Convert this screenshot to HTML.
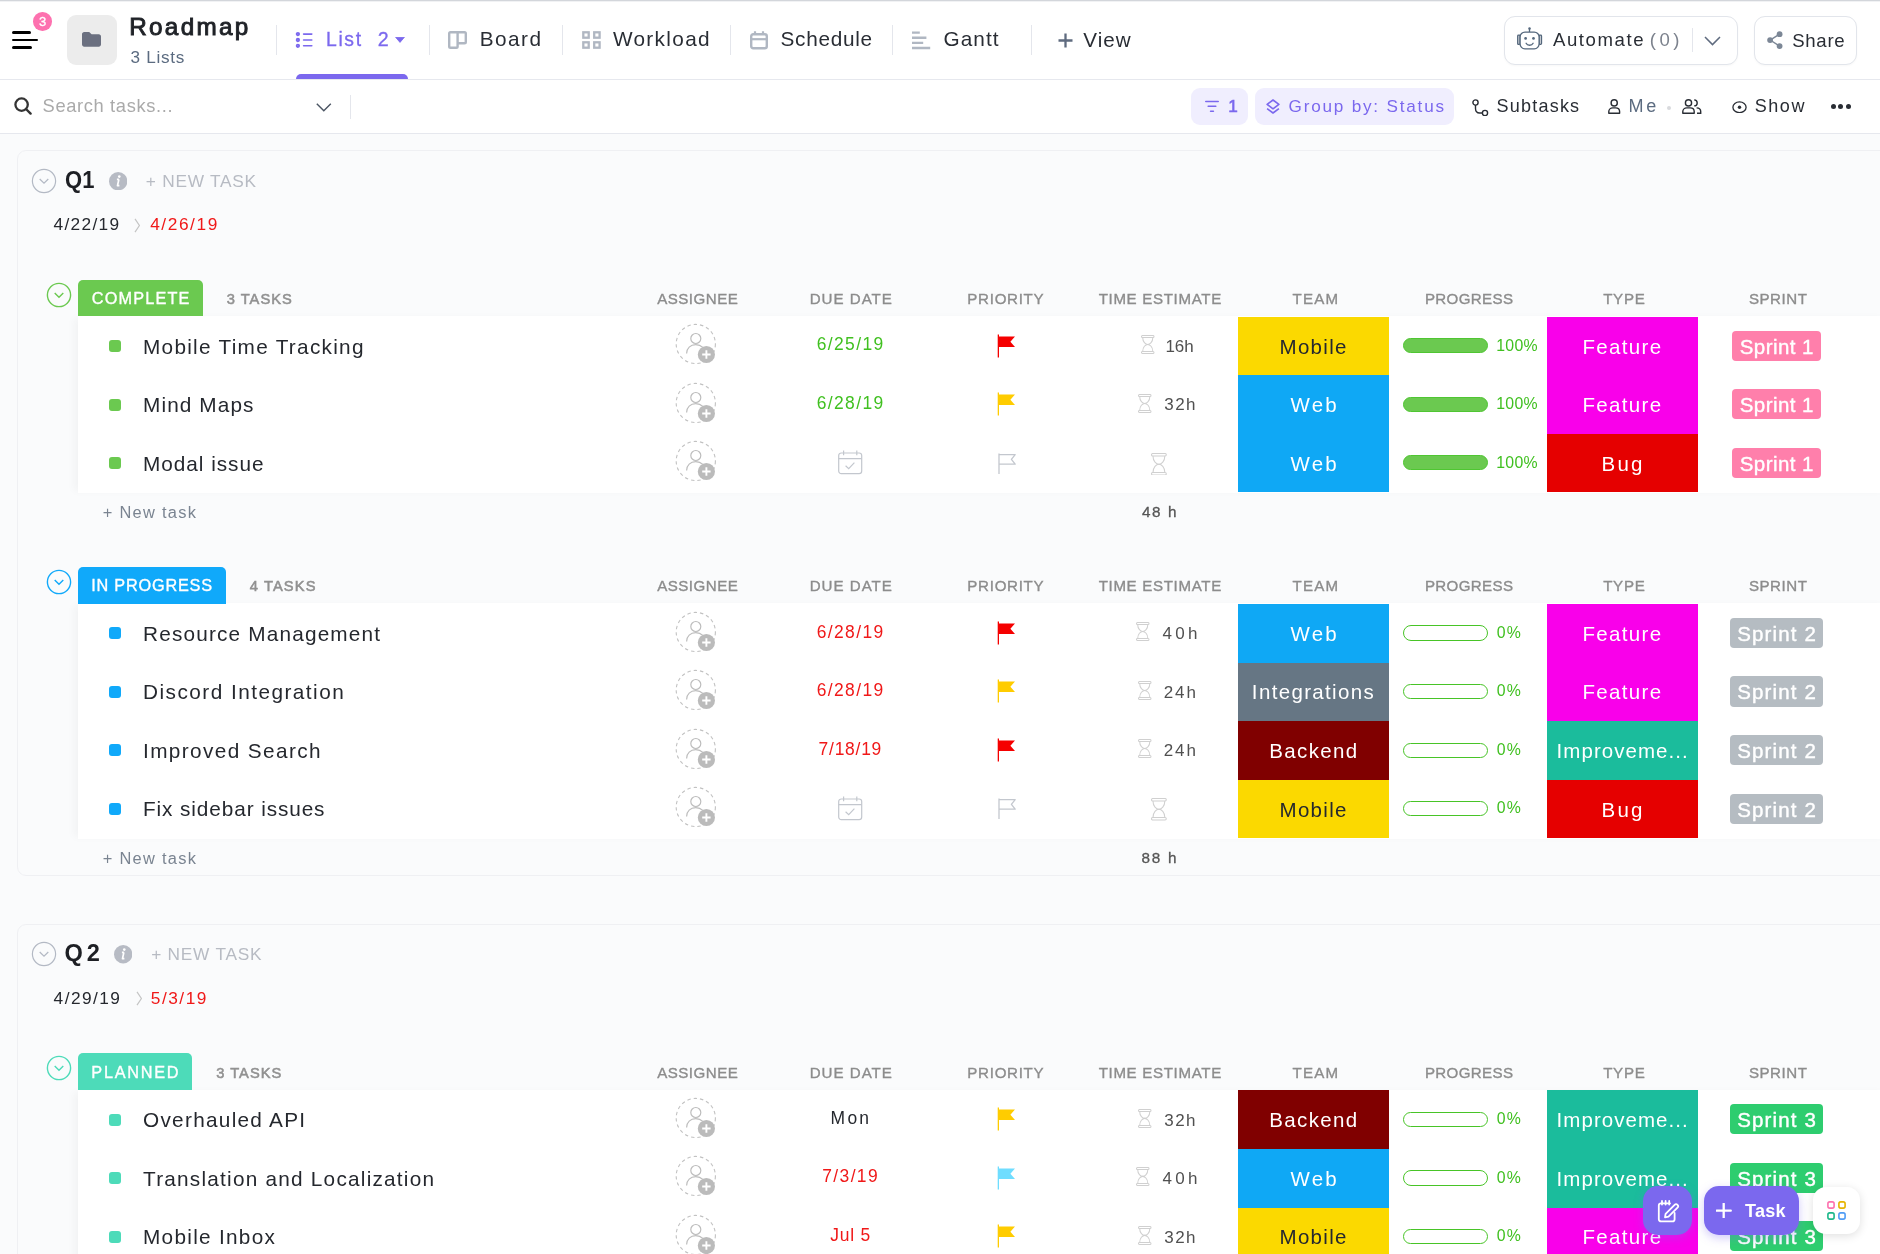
<!DOCTYPE html>
<html><head><meta charset="utf-8"><title>Roadmap</title>
<style>
html,body{margin:0;padding:0}
body{width:1880px;height:1254px;overflow:hidden;position:relative;background:#fafbfc;font-family:"Liberation Sans",sans-serif}
.a{position:absolute;display:block}
.t{position:absolute;white-space:nowrap;margin:0;padding:0}
#w{position:absolute;left:0;top:0;width:1880px;height:1254px;overflow:hidden;transform:translateZ(0);will-change:transform}
</style></head><body><div id="w">
<div class="a" style="left:0.00px;top:0.00px;width:1880.00px;height:79.00px;background:#fff;border-bottom:1px solid #e6e8ee;"></div>
<div class="a" style="left:0.00px;top:0.00px;width:1880.00px;height:1.00px;background:#d3d6db;"></div>
<div class="a" style="left:0.00px;top:1.00px;width:1880.00px;height:1.00px;background:#f1f2f4;"></div>
<div class="a" style="left:12.00px;top:31.40px;width:18.50px;height:2.30px;background:#000;border-radius:2px;"></div>
<div class="a" style="left:12.00px;top:38.90px;width:25.50px;height:2.30px;background:#000;border-radius:2px;"></div>
<div class="a" style="left:12.00px;top:46.40px;width:19.50px;height:2.30px;background:#000;border-radius:2px;"></div>
<div class="a" style="left:33.00px;top:12.20px;width:18.60px;height:18.60px;background:#fd71af;border-radius:50%;"></div>
<div class="t" style="left:38.95px;top:15.00px;font-size:13.08px;line-height:13.08px;color:#fff;-webkit-text-stroke:0.30px #fff;">3</div>
<div class="a" style="left:67.00px;top:15.00px;width:49.50px;height:49.50px;background:#ececec;border-radius:9px;"></div>
<svg class="a" style="left:82.00px;top:32.00px;" width="19" height="15" viewBox="0 0 19 15" fill="none"><path d="M0 2.2C0 1 1 0 2.2 0H7.2L9.6 2.3H16.8C18 2.3 19 3.3 19 4.5V12.6C19 13.8 18 14.8 16.8 14.8H2.2C1 14.8 0 13.8 0 12.6Z" fill="#6b7080"/></svg>
<div class="t" style="left:129.28px;top:15.00px;font-size:24.27px;line-height:24.27px;color:#1f2227;letter-spacing:2.286px;-webkit-text-stroke:0.95px #1f2227;">Roadmap</div>
<div class="t" style="left:130.55px;top:49.00px;font-size:17.15px;line-height:17.15px;color:#5b6b80;letter-spacing:0.717px;">3 Lists</div>
<div class="a" style="left:275.90px;top:25.00px;width:1.00px;height:30.00px;background:#e4e6ec;"></div>
<div class="a" style="left:428.70px;top:25.00px;width:1.00px;height:30.00px;background:#e4e6ec;"></div>
<div class="a" style="left:561.70px;top:25.00px;width:1.00px;height:30.00px;background:#e4e6ec;"></div>
<div class="a" style="left:729.90px;top:25.00px;width:1.00px;height:30.00px;background:#e4e6ec;"></div>
<div class="a" style="left:891.90px;top:25.00px;width:1.00px;height:30.00px;background:#e4e6ec;"></div>
<div class="a" style="left:1030.90px;top:25.00px;width:1.00px;height:30.00px;background:#e4e6ec;"></div>
<svg class="a" style="left:295.20px;top:31.00px;" width="18" height="17" viewBox="0 0 18 17" fill="none"><g stroke="#7b68ee" stroke-width="1.9"><circle cx="2.9" cy="3.1" r="1.2"/><circle cx="2.9" cy="9.0" r="1.2"/><circle cx="2.9" cy="14.8" r="1.2"/></g><g stroke="#7b68ee" stroke-width="1.6" stroke-linecap="round"><path d="M8.6 3.1H16.8M8.6 9H16.8M8.6 14.8H16.8"/></g></svg>
<div class="t" style="left:325.96px;top:30.00px;font-size:19.33px;line-height:19.33px;color:#7b68ee;letter-spacing:1.682px;-webkit-text-stroke:0.30px #7b68ee;">List</div>
<div class="t" style="left:377.86px;top:30.00px;font-size:19.62px;line-height:19.62px;color:#7b68ee;-webkit-text-stroke:0.30px #7b68ee;">2</div>
<svg class="a" style="left:395.10px;top:36.60px;" width="10" height="6" viewBox="0 0 10 6" fill="none"><path d="M0.6 0.3H9.4L5 5.4Z" fill="#7b68ee" stroke="#7b68ee" stroke-width="0.8" stroke-linejoin="round"/></svg>
<div class="a" style="left:295.80px;top:74.20px;width:112.40px;height:5.00px;background:#7b68ee;border-radius:5px 5px 0 0;"></div>
<svg class="a" style="left:448.40px;top:31.00px;" width="19" height="18" viewBox="0 0 19 18" fill="none"><path d="M2.5 1.2H16.5C17.2 1.2 17.8 1.8 17.8 2.5V11C17.8 11.7 17.2 12.3 16.5 12.3H9.6V15.5C9.6 16.2 9 16.8 8.3 16.8H2.5C1.8 16.8 1.2 16.2 1.2 15.5V2.5C1.2 1.8 1.8 1.2 2.5 1.2ZM9.6 1.2V12.3" stroke="#b0b7c2" stroke-width="2.4" stroke-linejoin="round"/></svg>
<div class="t" style="left:479.69px;top:29.00px;font-size:20.78px;line-height:20.78px;color:#292d34;letter-spacing:1.470px;">Board</div>
<svg class="a" style="left:581.50px;top:31.00px;" width="19" height="18" viewBox="0 0 19 18" fill="none"><g stroke="#b0b7c2" stroke-width="2.3"><rect x="1.3" y="1.3" width="5.4" height="5.4"/><rect x="12.2" y="1.3" width="5.4" height="5.4"/><rect x="1.3" y="11.3" width="5.4" height="5.4"/><rect x="12.2" y="11.3" width="5.4" height="5.4"/></g></svg>
<div class="t" style="left:612.91px;top:29.00px;font-size:20.78px;line-height:20.78px;color:#292d34;letter-spacing:1.335px;">Workload</div>
<svg class="a" style="left:750.00px;top:31.00px;" width="18" height="18.5" viewBox="0 0 18 18.5" fill="none"><rect x="1.2" y="3.2" width="15.6" height="14" rx="2" stroke="#b0b7c2" stroke-width="2.4"/><path d="M1.2 8.2H16.8" stroke="#b0b7c2" stroke-width="2.2"/><path d="M5 0.3V3M13 0.3V3" stroke="#b0b7c2" stroke-width="2.2"/></svg>
<div class="t" style="left:780.56px;top:29.00px;font-size:20.78px;line-height:20.78px;color:#292d34;letter-spacing:0.699px;">Schedule</div>
<svg class="a" style="left:912.00px;top:31.00px;" width="18.5" height="18.5" viewBox="0 0 18.5 18.5" fill="none"><g stroke="#b0b7c2" stroke-width="2.4"><path d="M0 1.6H7.8M0 6.8H14.4M0 11.9H11.2M0 17H18.2"/></g></svg>
<div class="t" style="left:943.45px;top:29.00px;font-size:20.78px;line-height:20.78px;color:#292d34;letter-spacing:1.065px;">Gantt</div>
<svg class="a" style="left:1058.00px;top:33.30px;" width="15" height="15" viewBox="0 0 15 15" fill="none"><path d="M7.5 0.5V14.5M0.5 7.5H14.5" stroke="#5f6b7f" stroke-width="2.3"/></svg>
<div class="t" style="left:1083.21px;top:30.00px;font-size:20.64px;line-height:20.64px;color:#292d34;letter-spacing:1.068px;">View</div>
<div class="a" style="left:1503.5px;top:16px;width:232.5px;height:47px;border:1px solid #e2e5eb;border-radius:11px;box-shadow:0 1px 2px rgba(0,0,0,0.03);background:#fff"></div>
<svg class="a" style="left:1517.00px;top:27.00px;" width="25.5" height="22.5" viewBox="0 0 25.5 22.5" fill="none"><g stroke="#54677c" stroke-width="1.3" stroke-linejoin="round"><rect x="0.7" y="8.1" width="2.4" height="9.3" rx="0.8" fill="#d9dbdf"/><rect x="22.1" y="8.1" width="2.4" height="9.3" rx="0.8" fill="#d9dbdf"/><rect x="3.1" y="5.1" width="19" height="16.7" rx="4.8" fill="#fff"/><path d="M12.5 5V2"/><path d="M9.1 16.3C10.4 18.9 14.8 18.9 16.1 16.3" stroke-linecap="round"/></g><circle cx="12.5" cy="1.5" r="1.25" fill="#54677c"/><circle cx="8.6" cy="11.4" r="1.35" fill="#54677c"/><circle cx="16.5" cy="11.4" r="1.35" fill="#54677c"/></svg>
<div class="t" style="left:1552.96px;top:31.00px;font-size:18.60px;line-height:18.60px;color:#292d34;letter-spacing:1.576px;">Automate</div>
<div class="t" style="left:1649.85px;top:31.00px;font-size:18.60px;line-height:18.60px;color:#7c828d;letter-spacing:3.435px;">(0)</div>
<div class="a" style="left:1692.00px;top:27.70px;width:1.00px;height:24.50px;background:#e4e6ec;"></div>
<svg class="a" style="left:1703.50px;top:35.50px;" width="17" height="10" viewBox="0 0 17 10" fill="none"><path d="M1 1L8.5 8.6L16 1" stroke="#5f6b7f" stroke-width="1.5"/></svg>
<div class="a" style="left:1754px;top:16px;width:101px;height:47px;border:1px solid #e2e5eb;border-radius:11px;box-shadow:0 1px 2px rgba(0,0,0,0.03);background:#fff"></div>
<svg class="a" style="left:1767.00px;top:31.00px;" width="16.5" height="18.5" viewBox="0 0 16.5 18.5" fill="none"><path d="M12.6 3.2L3.2 9.1L12.6 15.1" stroke="#7c8796" stroke-width="1.4"/><circle cx="12.6" cy="3.2" r="2.9" fill="#7c8796"/><circle cx="3.1" cy="9.1" r="2.9" fill="#7c8796"/><circle cx="12.6" cy="15.1" r="2.9" fill="#7c8796"/></svg>
<div class="t" style="left:1792.16px;top:32.00px;font-size:18.60px;line-height:18.60px;color:#292d34;letter-spacing:0.731px;">Share</div>
<div class="a" style="left:0.00px;top:80.00px;width:1880.00px;height:53.00px;background:#fff;border-bottom:1px solid #e6e8ee;"></div>
<svg class="a" style="left:14.00px;top:97.30px;" width="18" height="18" viewBox="0 0 18 18" fill="none"><circle cx="7.6" cy="7.6" r="6.2" stroke="#343434" stroke-width="2.3"/><path d="M12 12L16.6 16.6" stroke="#343434" stroke-width="2.4" stroke-linecap="round"/></svg>
<div class="t" style="left:42.57px;top:97.00px;font-size:18.31px;line-height:18.31px;color:#aaaaaa;letter-spacing:0.641px;">Search tasks...</div>
<svg class="a" style="left:316.00px;top:102.60px;" width="16" height="9" viewBox="0 0 16 9" fill="none"><path d="M0.8 0.8L7.8 7.8L14.8 0.8" stroke="#4b5563" stroke-width="1.4"/></svg>
<div class="a" style="left:350.20px;top:94.50px;width:1.00px;height:24.00px;background:#e4e6ec;"></div>
<div class="a" style="left:1191.00px;top:87.70px;width:57.40px;height:37.30px;background:#f0eefe;border-radius:9px;"></div>
<svg class="a" style="left:1204.70px;top:100.00px;" width="14" height="13" viewBox="0 0 14 13" fill="none"><g stroke="#7b68ee" stroke-width="1.6" stroke-linecap="round"><path d="M0.8 1.5H13.2M3.2 6.3H10.8M5.6 11.2H8.4"/></g></svg>
<div class="t" style="left:1228.19px;top:98.00px;font-size:17.15px;line-height:17.15px;color:#7b68ee;-webkit-text-stroke:0.60px #7b68ee;">1</div>
<div class="a" style="left:1254.90px;top:87.70px;width:199.10px;height:37.30px;background:#f0eefe;border-radius:9px;"></div>
<svg class="a" style="left:1266.30px;top:99.00px;" width="14" height="15.5" viewBox="0 0 14 15.5" fill="none"><g stroke="#7b68ee" stroke-width="1.6" stroke-linejoin="round"><path d="M7 1L12.9 5.4L7 9.8L1.1 5.4Z"/><path d="M1.1 9.6L7 14L12.9 9.6"/></g></svg>
<div class="t" style="left:1288.54px;top:98.00px;font-size:17.15px;line-height:17.15px;color:#7b68ee;letter-spacing:1.792px;">Group by: Status</div>
<svg class="a" style="left:1472.00px;top:98.50px;" width="16.5" height="17.5" viewBox="0 0 16.5 17.5" fill="none"><g stroke="#292d34" stroke-width="1.4"><circle cx="3.5" cy="3.5" r="2.6"/><circle cx="13" cy="14" r="2.6"/><path d="M3.5 6.1V9.5C3.5 12 5 14 7.5 14H10.4"/></g></svg>
<div class="t" style="left:1496.58px;top:97.00px;font-size:18.02px;line-height:18.02px;color:#292d34;letter-spacing:1.205px;">Subtasks</div>
<svg class="a" style="left:1608.00px;top:99.00px;" width="12.5" height="15" viewBox="0 0 12.5 15" fill="none"><g stroke="#292d34" stroke-width="1.4"><circle cx="6.2" cy="3.9" r="3.1"/><path d="M0.8 14.3V12.6C0.8 10.4 2.6 8.9 4.8 8.9H7.6C9.8 8.9 11.6 10.4 11.6 12.6V14.3Z" stroke-linejoin="round"/></g></svg>
<div class="t" style="left:1628.52px;top:97.00px;font-size:18.02px;line-height:18.02px;color:#5b6b80;letter-spacing:2.742px;">Me</div>
<div class="a" style="left:1667.00px;top:105.50px;width:4.00px;height:4.00px;background:#d9dadd;border-radius:50%;"></div>
<svg class="a" style="left:1682.00px;top:99.00px;" width="19.5" height="15" viewBox="0 0 19.5 15" fill="none"><g stroke="#292d34" stroke-width="1.4"><circle cx="6.5" cy="3.9" r="3.1"/><path d="M0.8 14.3V12.6C0.8 10.4 2.6 8.9 4.8 8.9H8.2C10.4 8.9 12.2 10.4 12.2 12.6V14.3Z" stroke-linejoin="round"/><path d="M12.2 0.9C13.9 1 15.2 2.3 15.2 3.9C15.2 5.5 13.9 6.8 12.2 6.9M14.6 8.9C16.9 9 18.7 10.5 18.7 12.6V14.3H15"/></g></svg>
<svg class="a" style="left:1731.50px;top:100.50px;" width="15" height="12.5" viewBox="0 0 15 12.5" fill="none"><ellipse cx="7.5" cy="6.2" rx="6.6" ry="5.4" stroke="#292d34" stroke-width="1.3"/><circle cx="7.5" cy="6.2" r="1.7" fill="#292d34"/></svg>
<div class="t" style="left:1754.68px;top:97.00px;font-size:18.02px;line-height:18.02px;color:#292d34;letter-spacing:1.563px;">Show</div>
<div class="a" style="left:1830.60px;top:104.20px;width:5.00px;height:5.00px;background:#292d34;border-radius:50%;"></div>
<div class="a" style="left:1838.20px;top:104.20px;width:5.00px;height:5.00px;background:#292d34;border-radius:50%;"></div>
<div class="a" style="left:1845.80px;top:104.20px;width:5.00px;height:5.00px;background:#292d34;border-radius:50%;"></div>
<div class="a" style="left:17px;top:150.20px;width:1900px;height:725.80px;border:1px solid #eff0f3;border-radius:9px;background:#fafbfc;box-sizing:border-box"></div>
<svg class="a" style="left:31.00px;top:167.50px;" width="26" height="26" viewBox="0 0 26 26" fill="none"><circle cx="13" cy="13" r="11.6" stroke="#b3b9c4" stroke-width="1.2"/><path d="M8.7 11L13 15.2L17.3 11" stroke="#b3b9c4" stroke-width="1.2"/></svg>
<div class="t" style="left:64.53px;top:169.00px;font-size:23.55px;line-height:23.55px;color:#1d1f24;transform-origin:0.97px 0;transform:scaleX(0.9332);font-weight:bold;">Q1</div>
<svg class="a" style="left:109.00px;top:171.70px;" width="18.4" height="18.4" viewBox="0 0 18.4 18.4" fill="none"><circle cx="9.2" cy="9.2" r="9.2" fill="#b7bbc4"/><path d="M9.9 7.3L8.5 13.6H10.4M7.9 7.3H9.9" stroke="#fff" stroke-width="1.7" stroke-linejoin="round"/><circle cx="10.3" cy="4.6" r="1.3" fill="#fff"/></svg>
<div class="t" style="left:145.86px;top:173.00px;font-size:17.30px;line-height:17.30px;color:#b7bbc3;letter-spacing:0.722px;">+ NEW TASK</div>
<div class="t" style="left:53.60px;top:216.00px;font-size:17.30px;line-height:17.30px;color:#25282e;letter-spacing:1.301px;">4/22/19</div>
<svg class="a" style="left:134.00px;top:217.70px;" width="7" height="15" viewBox="0 0 7 15" fill="none"><path d="M1 0.8L5.4 7.5L1 14.2" stroke="#c4c4c4" stroke-width="1.2"/></svg>
<div class="t" style="left:150.20px;top:216.00px;font-size:17.30px;line-height:17.30px;color:#f01818;letter-spacing:1.568px;">4/26/19</div>
<div class="a" style="left:78.00px;top:316.00px;width:1810.00px;height:176.85px;background:#fff;box-shadow:-6px 0 8px -2px rgba(0,0,0,0.035);"></div>
<div class="a" style="left:78.00px;top:279.60px;width:125.00px;height:36.80px;background:#6bc950;border-radius:5px 5px 0 0;"></div>
<div class="t" style="left:91.85px;top:290.00px;font-size:16.28px;line-height:16.28px;color:#fff;letter-spacing:1.161px;-webkit-text-stroke:0.35px #fff;">COMPLETE</div>
<svg class="a" style="left:46.30px;top:281.70px;" width="26" height="26" viewBox="0 0 26 26" fill="none"><circle cx="13" cy="13" r="11.6" stroke="#6bc950" stroke-width="1.4"/><path d="M8.7 11L13 15.2L17.3 11" stroke="#6bc950" stroke-width="1.4"/></svg>
<div class="t" style="left:226.72px;top:292.00px;font-size:14.68px;line-height:14.68px;color:#919191;letter-spacing:1.018px;-webkit-text-stroke:0.55px #919191;">3 TASKS</div>
<div class="t" style="left:657.15px;top:291.00px;font-size:15.12px;line-height:15.12px;color:#8c8c8c;letter-spacing:0.492px;-webkit-text-stroke:0.35px #8c8c8c;">ASSIGNEE</div>
<div class="t" style="left:809.63px;top:291.00px;font-size:15.12px;line-height:15.12px;color:#8c8c8c;letter-spacing:1.001px;-webkit-text-stroke:0.35px #8c8c8c;">DUE DATE</div>
<div class="t" style="left:967.33px;top:291.00px;font-size:15.12px;line-height:15.12px;color:#8c8c8c;letter-spacing:0.705px;-webkit-text-stroke:0.35px #8c8c8c;">PRIORITY</div>
<div class="t" style="left:1098.64px;top:291.00px;font-size:15.12px;line-height:15.12px;color:#8c8c8c;letter-spacing:0.662px;-webkit-text-stroke:0.35px #8c8c8c;">TIME ESTIMATE</div>
<div class="t" style="left:1292.44px;top:291.00px;font-size:15.12px;line-height:15.12px;color:#8c8c8c;letter-spacing:1.213px;-webkit-text-stroke:0.35px #8c8c8c;">TEAM</div>
<div class="t" style="left:1424.93px;top:291.00px;font-size:15.12px;line-height:15.12px;color:#8c8c8c;letter-spacing:0.344px;-webkit-text-stroke:0.35px #8c8c8c;">PROGRESS</div>
<div class="t" style="left:1603.14px;top:291.00px;font-size:15.12px;line-height:15.12px;color:#8c8c8c;letter-spacing:0.753px;-webkit-text-stroke:0.35px #8c8c8c;">TYPE</div>
<div class="t" style="left:1748.89px;top:291.00px;font-size:15.12px;line-height:15.12px;color:#8c8c8c;letter-spacing:0.530px;-webkit-text-stroke:0.35px #8c8c8c;">SPRINT</div>
<div class="a" style="left:1237.50px;top:316.80px;width:151.60px;height:58.85px;background:#fbd900;"></div>
<div class="a" style="left:1546.90px;top:316.80px;width:150.80px;height:58.85px;background:#f900ea;"></div>
<div class="a" style="left:1237.50px;top:375.35px;width:151.60px;height:58.85px;background:#0fa8f5;"></div>
<div class="a" style="left:1546.90px;top:375.35px;width:150.80px;height:58.85px;background:#f900ea;"></div>
<div class="a" style="left:1237.50px;top:433.90px;width:151.60px;height:58.55px;background:#0fa8f5;"></div>
<div class="a" style="left:1546.90px;top:433.90px;width:150.80px;height:58.55px;background:#e50000;"></div>
<div class="a" style="left:109.00px;top:340.00px;width:12.00px;height:12.00px;background:#6bc950;border-radius:3px;"></div>
<div class="t" style="left:143.00px;top:337.00px;font-size:20.78px;line-height:20.78px;color:#25282e;letter-spacing:1.278px;">Mobile Time Tracking</div>
<svg class="a" style="left:675.00px;top:323.30px;" width="42" height="42" viewBox="0 0 42 42" fill="none"><circle cx="20.8" cy="21" r="19.6" stroke="#c2c2c2" stroke-width="1.1" stroke-dasharray="3.4 3"/><circle cx="20.8" cy="15.5" r="5" stroke="#bdbdbd" stroke-width="1.2"/><path d="M11.6 30.5C11.6 25.2 15.4 21.6 20.8 21.6C23.8 21.6 26 22.6 27.8 24.4" stroke="#bdbdbd" stroke-width="1.2"/><circle cx="31.4" cy="31.5" r="8.6" fill="#bbbbbb"/><path d="M31.4 27.3V35.7M27.2 31.5H35.6" stroke="#fff" stroke-width="1.9"/></svg>
<div class="t" style="left:816.66px;top:336.00px;font-size:17.44px;line-height:17.44px;color:#40c020;letter-spacing:1.403px;">6/25/19</div>
<svg class="a" style="left:996.00px;top:333.50px;" width="21" height="25" viewBox="0 0 21 25" fill="none"><path d="M2.35 0.5V23.4" stroke="#f50000" stroke-width="1.3"/><path d="M2.3 2.5H19L14.4 7.7L19 12.9H2.3Z" fill="#f50000"/></svg>
<svg class="a" style="left:1141.30px;top:335.10px;" width="13.5" height="19" viewBox="0 0 13.5 19" fill="none"><g stroke="#d0d0d0" stroke-width="1.05" fill="none"><rect x="0.5" y="0.5" width="12.50" height="2.07" rx="1.03"/><rect x="0.5" y="16.43" width="12.50" height="2.07" rx="1.03"/><path d="M1.69 2.57C1.69 7.03 4.59 9.40 6.75 9.40C8.91 9.40 11.81 7.03 11.81 2.57"/><path d="M1.69 16.43C1.69 11.97 4.59 9.40 6.75 9.40C8.91 9.40 11.81 11.97 11.81 16.43"/></g></svg>
<div class="t" style="left:1165.40px;top:338.00px;font-size:17.01px;line-height:17.01px;color:#505050;letter-spacing:-0.037px;">16h</div>
<div class="t" style="left:1279.52px;top:337.00px;font-size:20.49px;line-height:20.49px;color:#25282e;letter-spacing:1.324px;">Mobile</div>
<div class="a" style="left:1403.00px;top:338.20px;width:84.80px;height:15.20px;background:#6bc950;border-radius:8px;box-sizing:border-box;border:1px solid #4fc632;"></div>
<div class="t" style="left:1496.19px;top:338.00px;font-size:15.84px;line-height:15.84px;color:#40c020;letter-spacing:0.317px;">100%</div>
<div class="t" style="left:1582.52px;top:337.00px;font-size:20.49px;line-height:20.49px;color:#fff;letter-spacing:1.327px;">Feature</div>
<div class="a" style="left:1732.10px;top:330.70px;width:89.10px;height:30.10px;background:#ff7fab;border-radius:4px;"></div>
<div class="t" style="left:1739.67px;top:337.00px;font-size:20.49px;line-height:20.49px;color:#fff;letter-spacing:0.457px;-webkit-text-stroke:0.40px #fff;">Sprint 1</div>
<div class="a" style="left:109.00px;top:398.55px;width:12.00px;height:12.00px;background:#6bc950;border-radius:3px;"></div>
<div class="t" style="left:143.00px;top:395.00px;font-size:20.78px;line-height:20.78px;color:#25282e;letter-spacing:1.112px;">Mind Maps</div>
<svg class="a" style="left:675.00px;top:381.85px;" width="42" height="42" viewBox="0 0 42 42" fill="none"><circle cx="20.8" cy="21" r="19.6" stroke="#c2c2c2" stroke-width="1.1" stroke-dasharray="3.4 3"/><circle cx="20.8" cy="15.5" r="5" stroke="#bdbdbd" stroke-width="1.2"/><path d="M11.6 30.5C11.6 25.2 15.4 21.6 20.8 21.6C23.8 21.6 26 22.6 27.8 24.4" stroke="#bdbdbd" stroke-width="1.2"/><circle cx="31.4" cy="31.5" r="8.6" fill="#bbbbbb"/><path d="M31.4 27.3V35.7M27.2 31.5H35.6" stroke="#fff" stroke-width="1.9"/></svg>
<div class="t" style="left:816.66px;top:395.00px;font-size:17.44px;line-height:17.44px;color:#40c020;letter-spacing:1.403px;">6/28/19</div>
<svg class="a" style="left:996.00px;top:392.05px;" width="21" height="25" viewBox="0 0 21 25" fill="none"><path d="M2.35 0.5V23.4" stroke="#ffcc00" stroke-width="1.3"/><path d="M2.3 2.5H19L14.4 7.7L19 12.9H2.3Z" fill="#ffcc00"/></svg>
<svg class="a" style="left:1138.30px;top:393.65px;" width="13.5" height="19" viewBox="0 0 13.5 19" fill="none"><g stroke="#d0d0d0" stroke-width="1.05" fill="none"><rect x="0.5" y="0.5" width="12.50" height="2.07" rx="1.03"/><rect x="0.5" y="16.43" width="12.50" height="2.07" rx="1.03"/><path d="M1.69 2.57C1.69 7.03 4.59 9.40 6.75 9.40C8.91 9.40 11.81 7.03 11.81 2.57"/><path d="M1.69 16.43C1.69 11.97 4.59 9.40 6.75 9.40C8.91 9.40 11.81 11.97 11.81 16.43"/></g></svg>
<div class="t" style="left:1164.35px;top:396.00px;font-size:17.01px;line-height:17.01px;color:#505050;letter-spacing:1.389px;">32h</div>
<div class="t" style="left:1290.56px;top:395.00px;font-size:20.49px;line-height:20.49px;color:#fff;letter-spacing:2.156px;">Web</div>
<div class="a" style="left:1403.00px;top:396.75px;width:84.80px;height:15.20px;background:#6bc950;border-radius:8px;box-sizing:border-box;border:1px solid #4fc632;"></div>
<div class="t" style="left:1496.19px;top:396.00px;font-size:15.84px;line-height:15.84px;color:#40c020;letter-spacing:0.317px;">100%</div>
<div class="t" style="left:1582.52px;top:395.00px;font-size:20.49px;line-height:20.49px;color:#fff;letter-spacing:1.327px;">Feature</div>
<div class="a" style="left:1732.10px;top:389.25px;width:89.10px;height:30.10px;background:#ff7fab;border-radius:4px;"></div>
<div class="t" style="left:1739.67px;top:395.00px;font-size:20.49px;line-height:20.49px;color:#fff;letter-spacing:0.457px;-webkit-text-stroke:0.40px #fff;">Sprint 1</div>
<div class="a" style="left:109.00px;top:457.10px;width:12.00px;height:12.00px;background:#6bc950;border-radius:3px;"></div>
<div class="t" style="left:143.00px;top:454.00px;font-size:20.78px;line-height:20.78px;color:#25282e;letter-spacing:0.972px;">Modal issue</div>
<svg class="a" style="left:675.00px;top:440.40px;" width="42" height="42" viewBox="0 0 42 42" fill="none"><circle cx="20.8" cy="21" r="19.6" stroke="#c2c2c2" stroke-width="1.1" stroke-dasharray="3.4 3"/><circle cx="20.8" cy="15.5" r="5" stroke="#bdbdbd" stroke-width="1.2"/><path d="M11.6 30.5C11.6 25.2 15.4 21.6 20.8 21.6C23.8 21.6 26 22.6 27.8 24.4" stroke="#bdbdbd" stroke-width="1.2"/><circle cx="31.4" cy="31.5" r="8.6" fill="#bbbbbb"/><path d="M31.4 27.3V35.7M27.2 31.5H35.6" stroke="#fff" stroke-width="1.9"/></svg>
<svg class="a" style="left:838.00px;top:450.40px;" width="24.5" height="24.5" viewBox="0 0 24.5 24.5" fill="none"><g stroke="#c3c7ce" stroke-width="1.2"><rect x="0.7" y="3" width="23" height="20.6" rx="2.6"/><path d="M0.7 8.6H23.7M5.6 0.4V5.2M18.8 0.4V5.2"/><path d="M7.6 15.8L10.7 18.6L16.4 12.6"/></g></svg>
<svg class="a" style="left:996.80px;top:452.60px;" width="21" height="23" viewBox="0 0 21 23" fill="none"><path d="M2 0.5V21" stroke="#c3c7ce" stroke-width="1.3"/><path d="M2 1.6H18.2L14.4 6.4L18.2 11.2H2" stroke="#c3c7ce" stroke-width="1.3" stroke-linejoin="round"/></svg>
<svg class="a" style="left:1151.20px;top:452.50px;" width="15.8" height="22.6" viewBox="0 0 15.8 22.6" fill="none"><g stroke="#d0d0d0" stroke-width="1.05" fill="none"><rect x="0.5" y="0.5" width="14.80" height="2.55" rx="1.28"/><rect x="0.5" y="19.55" width="14.80" height="2.55" rx="1.28"/><path d="M1.98 3.05C1.98 8.36 5.37 11.19 7.90 11.19C10.43 11.19 13.83 8.36 13.83 3.05"/><path d="M1.98 19.55C1.98 14.24 5.37 11.19 7.90 11.19C10.43 11.19 13.83 14.24 13.83 19.55"/></g></svg>
<div class="t" style="left:1290.56px;top:454.00px;font-size:20.49px;line-height:20.49px;color:#fff;letter-spacing:2.156px;">Web</div>
<div class="a" style="left:1403.00px;top:455.30px;width:84.80px;height:15.20px;background:#6bc950;border-radius:8px;box-sizing:border-box;border:1px solid #4fc632;"></div>
<div class="t" style="left:1496.19px;top:455.00px;font-size:15.84px;line-height:15.84px;color:#40c020;letter-spacing:0.317px;">100%</div>
<div class="t" style="left:1601.52px;top:454.00px;font-size:20.49px;line-height:20.49px;color:#fff;letter-spacing:2.268px;">Bug</div>
<div class="a" style="left:1732.10px;top:447.80px;width:89.10px;height:30.10px;background:#ff7fab;border-radius:4px;"></div>
<div class="t" style="left:1739.67px;top:454.00px;font-size:20.49px;line-height:20.49px;color:#fff;letter-spacing:0.457px;-webkit-text-stroke:0.40px #fff;">Sprint 1</div>
<div class="t" style="left:102.70px;top:504.00px;font-size:16.42px;line-height:16.42px;color:#7a8491;letter-spacing:1.287px;">+ New task</div>
<div class="t" style="left:1141.90px;top:504.00px;font-size:15.26px;line-height:15.26px;color:#555;letter-spacing:1.613px;-webkit-text-stroke:0.30px #555;">48 h</div>
<div class="a" style="left:78.00px;top:603.20px;width:1810.00px;height:235.40px;background:#fff;box-shadow:-6px 0 8px -2px rgba(0,0,0,0.035);"></div>
<div class="a" style="left:78.00px;top:566.80px;width:148.00px;height:36.80px;background:#10a9fa;border-radius:5px 5px 0 0;"></div>
<div class="t" style="left:91.17px;top:577.00px;font-size:16.28px;line-height:16.28px;color:#fff;letter-spacing:0.793px;-webkit-text-stroke:0.35px #fff;">IN PROGRESS</div>
<svg class="a" style="left:46.30px;top:568.90px;" width="26" height="26" viewBox="0 0 26 26" fill="none"><circle cx="13" cy="13" r="11.6" stroke="#10a9fa" stroke-width="1.4"/><path d="M8.7 11L13 15.2L17.3 11" stroke="#10a9fa" stroke-width="1.4"/></svg>
<div class="t" style="left:249.64px;top:579.00px;font-size:14.68px;line-height:14.68px;color:#919191;letter-spacing:1.147px;-webkit-text-stroke:0.55px #919191;">4 TASKS</div>
<div class="t" style="left:657.15px;top:578.00px;font-size:15.12px;line-height:15.12px;color:#8c8c8c;letter-spacing:0.492px;-webkit-text-stroke:0.35px #8c8c8c;">ASSIGNEE</div>
<div class="t" style="left:809.63px;top:578.00px;font-size:15.12px;line-height:15.12px;color:#8c8c8c;letter-spacing:1.001px;-webkit-text-stroke:0.35px #8c8c8c;">DUE DATE</div>
<div class="t" style="left:967.33px;top:578.00px;font-size:15.12px;line-height:15.12px;color:#8c8c8c;letter-spacing:0.705px;-webkit-text-stroke:0.35px #8c8c8c;">PRIORITY</div>
<div class="t" style="left:1098.64px;top:578.00px;font-size:15.12px;line-height:15.12px;color:#8c8c8c;letter-spacing:0.662px;-webkit-text-stroke:0.35px #8c8c8c;">TIME ESTIMATE</div>
<div class="t" style="left:1292.44px;top:578.00px;font-size:15.12px;line-height:15.12px;color:#8c8c8c;letter-spacing:1.213px;-webkit-text-stroke:0.35px #8c8c8c;">TEAM</div>
<div class="t" style="left:1424.93px;top:578.00px;font-size:15.12px;line-height:15.12px;color:#8c8c8c;letter-spacing:0.344px;-webkit-text-stroke:0.35px #8c8c8c;">PROGRESS</div>
<div class="t" style="left:1603.14px;top:578.00px;font-size:15.12px;line-height:15.12px;color:#8c8c8c;letter-spacing:0.753px;-webkit-text-stroke:0.35px #8c8c8c;">TYPE</div>
<div class="t" style="left:1748.89px;top:578.00px;font-size:15.12px;line-height:15.12px;color:#8c8c8c;letter-spacing:0.530px;-webkit-text-stroke:0.35px #8c8c8c;">SPRINT</div>
<div class="a" style="left:1237.50px;top:604.00px;width:151.60px;height:58.85px;background:#0fa8f5;"></div>
<div class="a" style="left:1546.90px;top:604.00px;width:150.80px;height:58.85px;background:#f900ea;"></div>
<div class="a" style="left:1237.50px;top:662.55px;width:151.60px;height:58.85px;background:#667684;"></div>
<div class="a" style="left:1546.90px;top:662.55px;width:150.80px;height:58.85px;background:#f900ea;"></div>
<div class="a" style="left:1237.50px;top:721.10px;width:151.60px;height:58.85px;background:#800000;"></div>
<div class="a" style="left:1546.90px;top:721.10px;width:150.80px;height:58.85px;background:#1bbc9c;"></div>
<div class="a" style="left:1237.50px;top:779.65px;width:151.60px;height:58.55px;background:#fbd900;"></div>
<div class="a" style="left:1546.90px;top:779.65px;width:150.80px;height:58.55px;background:#e50000;"></div>
<div class="a" style="left:109.00px;top:627.20px;width:12.00px;height:12.00px;background:#10a9fa;border-radius:3px;"></div>
<div class="t" style="left:143.00px;top:624.00px;font-size:20.78px;line-height:20.78px;color:#25282e;letter-spacing:1.178px;">Resource Management</div>
<svg class="a" style="left:675.00px;top:610.50px;" width="42" height="42" viewBox="0 0 42 42" fill="none"><circle cx="20.8" cy="21" r="19.6" stroke="#c2c2c2" stroke-width="1.1" stroke-dasharray="3.4 3"/><circle cx="20.8" cy="15.5" r="5" stroke="#bdbdbd" stroke-width="1.2"/><path d="M11.6 30.5C11.6 25.2 15.4 21.6 20.8 21.6C23.8 21.6 26 22.6 27.8 24.4" stroke="#bdbdbd" stroke-width="1.2"/><circle cx="31.4" cy="31.5" r="8.6" fill="#bbbbbb"/><path d="M31.4 27.3V35.7M27.2 31.5H35.6" stroke="#fff" stroke-width="1.9"/></svg>
<div class="t" style="left:816.66px;top:624.00px;font-size:17.44px;line-height:17.44px;color:#f01818;letter-spacing:1.403px;">6/28/19</div>
<svg class="a" style="left:996.00px;top:620.70px;" width="21" height="25" viewBox="0 0 21 25" fill="none"><path d="M2.35 0.5V23.4" stroke="#f50000" stroke-width="1.3"/><path d="M2.3 2.5H19L14.4 7.7L19 12.9H2.3Z" fill="#f50000"/></svg>
<svg class="a" style="left:1136.40px;top:622.30px;" width="13.5" height="19" viewBox="0 0 13.5 19" fill="none"><g stroke="#d0d0d0" stroke-width="1.05" fill="none"><rect x="0.5" y="0.5" width="12.50" height="2.07" rx="1.03"/><rect x="0.5" y="16.43" width="12.50" height="2.07" rx="1.03"/><path d="M1.69 2.57C1.69 7.03 4.59 9.40 6.75 9.40C8.91 9.40 11.81 7.03 11.81 2.57"/><path d="M1.69 16.43C1.69 11.97 4.59 9.40 6.75 9.40C8.91 9.40 11.81 11.97 11.81 16.43"/></g></svg>
<div class="t" style="left:1162.51px;top:625.00px;font-size:17.01px;line-height:17.01px;color:#505050;letter-spacing:3.311px;">40h</div>
<div class="t" style="left:1290.56px;top:624.00px;font-size:20.49px;line-height:20.49px;color:#fff;letter-spacing:2.156px;">Web</div>
<div class="a" style="left:1403px;top:625.40px;width:84.9px;height:15.3px;box-sizing:border-box;border:1.4px solid #48c427;border-radius:8px;background:#fff"></div>
<div class="t" style="left:1496.78px;top:625.00px;font-size:15.84px;line-height:15.84px;color:#40c020;letter-spacing:1.085px;">0%</div>
<div class="t" style="left:1582.52px;top:624.00px;font-size:20.49px;line-height:20.49px;color:#fff;letter-spacing:1.327px;">Feature</div>
<div class="a" style="left:1730.20px;top:617.90px;width:92.60px;height:30.10px;background:#b5bcc2;border-radius:4px;"></div>
<div class="t" style="left:1737.17px;top:624.00px;font-size:20.49px;line-height:20.49px;color:#fff;letter-spacing:1.176px;-webkit-text-stroke:0.40px #fff;">Sprint 2</div>
<div class="a" style="left:109.00px;top:685.75px;width:12.00px;height:12.00px;background:#10a9fa;border-radius:3px;"></div>
<div class="t" style="left:143.00px;top:682.00px;font-size:20.78px;line-height:20.78px;color:#25282e;letter-spacing:1.467px;">Discord Integration</div>
<svg class="a" style="left:675.00px;top:669.05px;" width="42" height="42" viewBox="0 0 42 42" fill="none"><circle cx="20.8" cy="21" r="19.6" stroke="#c2c2c2" stroke-width="1.1" stroke-dasharray="3.4 3"/><circle cx="20.8" cy="15.5" r="5" stroke="#bdbdbd" stroke-width="1.2"/><path d="M11.6 30.5C11.6 25.2 15.4 21.6 20.8 21.6C23.8 21.6 26 22.6 27.8 24.4" stroke="#bdbdbd" stroke-width="1.2"/><circle cx="31.4" cy="31.5" r="8.6" fill="#bbbbbb"/><path d="M31.4 27.3V35.7M27.2 31.5H35.6" stroke="#fff" stroke-width="1.9"/></svg>
<div class="t" style="left:816.66px;top:682.00px;font-size:17.44px;line-height:17.44px;color:#f01818;letter-spacing:1.403px;">6/28/19</div>
<svg class="a" style="left:996.00px;top:679.25px;" width="21" height="25" viewBox="0 0 21 25" fill="none"><path d="M2.35 0.5V23.4" stroke="#ffcc00" stroke-width="1.3"/><path d="M2.3 2.5H19L14.4 7.7L19 12.9H2.3Z" fill="#ffcc00"/></svg>
<svg class="a" style="left:1138.30px;top:680.85px;" width="13.5" height="19" viewBox="0 0 13.5 19" fill="none"><g stroke="#d0d0d0" stroke-width="1.05" fill="none"><rect x="0.5" y="0.5" width="12.50" height="2.07" rx="1.03"/><rect x="0.5" y="16.43" width="12.50" height="2.07" rx="1.03"/><path d="M1.69 2.57C1.69 7.03 4.59 9.40 6.75 9.40C8.91 9.40 11.81 7.03 11.81 2.57"/><path d="M1.69 16.43C1.69 11.97 4.59 9.40 6.75 9.40C8.91 9.40 11.81 11.97 11.81 16.43"/></g></svg>
<div class="t" style="left:1163.64px;top:684.00px;font-size:17.01px;line-height:17.01px;color:#505050;letter-spacing:1.943px;">24h</div>
<div class="t" style="left:1251.86px;top:682.00px;font-size:20.49px;line-height:20.49px;color:#fff;letter-spacing:1.349px;">Integrations</div>
<div class="a" style="left:1403px;top:683.95px;width:84.9px;height:15.3px;box-sizing:border-box;border:1.4px solid #48c427;border-radius:8px;background:#fff"></div>
<div class="t" style="left:1496.78px;top:683.00px;font-size:15.84px;line-height:15.84px;color:#40c020;letter-spacing:1.085px;">0%</div>
<div class="t" style="left:1582.52px;top:682.00px;font-size:20.49px;line-height:20.49px;color:#fff;letter-spacing:1.327px;">Feature</div>
<div class="a" style="left:1730.20px;top:676.45px;width:92.60px;height:30.10px;background:#b5bcc2;border-radius:4px;"></div>
<div class="t" style="left:1737.17px;top:682.00px;font-size:20.49px;line-height:20.49px;color:#fff;letter-spacing:1.176px;-webkit-text-stroke:0.40px #fff;">Sprint 2</div>
<div class="a" style="left:109.00px;top:744.30px;width:12.00px;height:12.00px;background:#10a9fa;border-radius:3px;"></div>
<div class="t" style="left:143.00px;top:741.00px;font-size:20.78px;line-height:20.78px;color:#25282e;letter-spacing:1.391px;">Improved Search</div>
<svg class="a" style="left:675.00px;top:727.60px;" width="42" height="42" viewBox="0 0 42 42" fill="none"><circle cx="20.8" cy="21" r="19.6" stroke="#c2c2c2" stroke-width="1.1" stroke-dasharray="3.4 3"/><circle cx="20.8" cy="15.5" r="5" stroke="#bdbdbd" stroke-width="1.2"/><path d="M11.6 30.5C11.6 25.2 15.4 21.6 20.8 21.6C23.8 21.6 26 22.6 27.8 24.4" stroke="#bdbdbd" stroke-width="1.2"/><circle cx="31.4" cy="31.5" r="8.6" fill="#bbbbbb"/><path d="M31.4 27.3V35.7M27.2 31.5H35.6" stroke="#fff" stroke-width="1.9"/></svg>
<div class="t" style="left:818.61px;top:741.00px;font-size:17.44px;line-height:17.44px;color:#f01818;letter-spacing:0.754px;">7/18/19</div>
<svg class="a" style="left:996.00px;top:737.80px;" width="21" height="25" viewBox="0 0 21 25" fill="none"><path d="M2.35 0.5V23.4" stroke="#f50000" stroke-width="1.3"/><path d="M2.3 2.5H19L14.4 7.7L19 12.9H2.3Z" fill="#f50000"/></svg>
<svg class="a" style="left:1138.30px;top:739.40px;" width="13.5" height="19" viewBox="0 0 13.5 19" fill="none"><g stroke="#d0d0d0" stroke-width="1.05" fill="none"><rect x="0.5" y="0.5" width="12.50" height="2.07" rx="1.03"/><rect x="0.5" y="16.43" width="12.50" height="2.07" rx="1.03"/><path d="M1.69 2.57C1.69 7.03 4.59 9.40 6.75 9.40C8.91 9.40 11.81 7.03 11.81 2.57"/><path d="M1.69 16.43C1.69 11.97 4.59 9.40 6.75 9.40C8.91 9.40 11.81 11.97 11.81 16.43"/></g></svg>
<div class="t" style="left:1163.64px;top:742.00px;font-size:17.01px;line-height:17.01px;color:#505050;letter-spacing:1.943px;">24h</div>
<div class="t" style="left:1269.22px;top:741.00px;font-size:20.49px;line-height:20.49px;color:#fff;letter-spacing:1.374px;">Backend</div>
<div class="a" style="left:1403px;top:742.50px;width:84.9px;height:15.3px;box-sizing:border-box;border:1.4px solid #48c427;border-radius:8px;background:#fff"></div>
<div class="t" style="left:1496.78px;top:742.00px;font-size:15.84px;line-height:15.84px;color:#40c020;letter-spacing:1.085px;">0%</div>
<div class="t" style="left:1556.61px;top:741.00px;font-size:20.49px;line-height:20.49px;color:#fff;letter-spacing:1.053px;">Improveme...</div>
<div class="a" style="left:1730.20px;top:735.00px;width:92.60px;height:30.10px;background:#b5bcc2;border-radius:4px;"></div>
<div class="t" style="left:1737.17px;top:741.00px;font-size:20.49px;line-height:20.49px;color:#fff;letter-spacing:1.176px;-webkit-text-stroke:0.40px #fff;">Sprint 2</div>
<div class="a" style="left:109.00px;top:802.85px;width:12.00px;height:12.00px;background:#10a9fa;border-radius:3px;"></div>
<div class="t" style="left:143.00px;top:799.00px;font-size:20.78px;line-height:20.78px;color:#25282e;letter-spacing:0.901px;">Fix sidebar issues</div>
<svg class="a" style="left:675.00px;top:786.15px;" width="42" height="42" viewBox="0 0 42 42" fill="none"><circle cx="20.8" cy="21" r="19.6" stroke="#c2c2c2" stroke-width="1.1" stroke-dasharray="3.4 3"/><circle cx="20.8" cy="15.5" r="5" stroke="#bdbdbd" stroke-width="1.2"/><path d="M11.6 30.5C11.6 25.2 15.4 21.6 20.8 21.6C23.8 21.6 26 22.6 27.8 24.4" stroke="#bdbdbd" stroke-width="1.2"/><circle cx="31.4" cy="31.5" r="8.6" fill="#bbbbbb"/><path d="M31.4 27.3V35.7M27.2 31.5H35.6" stroke="#fff" stroke-width="1.9"/></svg>
<svg class="a" style="left:838.00px;top:796.15px;" width="24.5" height="24.5" viewBox="0 0 24.5 24.5" fill="none"><g stroke="#c3c7ce" stroke-width="1.2"><rect x="0.7" y="3" width="23" height="20.6" rx="2.6"/><path d="M0.7 8.6H23.7M5.6 0.4V5.2M18.8 0.4V5.2"/><path d="M7.6 15.8L10.7 18.6L16.4 12.6"/></g></svg>
<svg class="a" style="left:996.80px;top:798.35px;" width="21" height="23" viewBox="0 0 21 23" fill="none"><path d="M2 0.5V21" stroke="#c3c7ce" stroke-width="1.3"/><path d="M2 1.6H18.2L14.4 6.4L18.2 11.2H2" stroke="#c3c7ce" stroke-width="1.3" stroke-linejoin="round"/></svg>
<svg class="a" style="left:1151.20px;top:798.25px;" width="15.8" height="22.6" viewBox="0 0 15.8 22.6" fill="none"><g stroke="#d0d0d0" stroke-width="1.05" fill="none"><rect x="0.5" y="0.5" width="14.80" height="2.55" rx="1.28"/><rect x="0.5" y="19.55" width="14.80" height="2.55" rx="1.28"/><path d="M1.98 3.05C1.98 8.36 5.37 11.19 7.90 11.19C10.43 11.19 13.83 8.36 13.83 3.05"/><path d="M1.98 19.55C1.98 14.24 5.37 11.19 7.90 11.19C10.43 11.19 13.83 14.24 13.83 19.55"/></g></svg>
<div class="t" style="left:1279.52px;top:800.00px;font-size:20.49px;line-height:20.49px;color:#25282e;letter-spacing:1.324px;">Mobile</div>
<div class="a" style="left:1403px;top:801.05px;width:84.9px;height:15.3px;box-sizing:border-box;border:1.4px solid #48c427;border-radius:8px;background:#fff"></div>
<div class="t" style="left:1496.78px;top:800.00px;font-size:15.84px;line-height:15.84px;color:#40c020;letter-spacing:1.085px;">0%</div>
<div class="t" style="left:1601.52px;top:800.00px;font-size:20.49px;line-height:20.49px;color:#fff;letter-spacing:2.268px;">Bug</div>
<div class="a" style="left:1730.20px;top:793.55px;width:92.60px;height:30.10px;background:#b5bcc2;border-radius:4px;"></div>
<div class="t" style="left:1737.17px;top:800.00px;font-size:20.49px;line-height:20.49px;color:#fff;letter-spacing:1.176px;-webkit-text-stroke:0.40px #fff;">Sprint 2</div>
<div class="t" style="left:102.70px;top:850.00px;font-size:16.42px;line-height:16.42px;color:#7a8491;letter-spacing:1.287px;">+ New task</div>
<div class="t" style="left:1141.59px;top:850.00px;font-size:15.26px;line-height:15.26px;color:#555;letter-spacing:1.717px;-webkit-text-stroke:0.30px #555;">88 h</div>
<div class="a" style="left:17px;top:923.80px;width:1900px;height:600.00px;border:1px solid #eff0f3;border-radius:9px;background:#fafbfc;box-sizing:border-box"></div>
<svg class="a" style="left:31.00px;top:941.10px;" width="26" height="26" viewBox="0 0 26 26" fill="none"><circle cx="13" cy="13" r="11.6" stroke="#b3b9c4" stroke-width="1.2"/><path d="M8.7 11L13 15.2L17.3 11" stroke="#b3b9c4" stroke-width="1.2"/></svg>
<div class="t" style="left:64.53px;top:942.00px;font-size:23.55px;line-height:23.55px;color:#1d1f24;letter-spacing:3.998px;font-weight:bold;">Q2</div>
<svg class="a" style="left:113.70px;top:945.30px;" width="18.4" height="18.4" viewBox="0 0 18.4 18.4" fill="none"><circle cx="9.2" cy="9.2" r="9.2" fill="#b7bbc4"/><path d="M9.9 7.3L8.5 13.6H10.4M7.9 7.3H9.9" stroke="#fff" stroke-width="1.7" stroke-linejoin="round"/><circle cx="10.3" cy="4.6" r="1.3" fill="#fff"/></svg>
<div class="t" style="left:151.16px;top:946.00px;font-size:17.30px;line-height:17.30px;color:#b7bbc3;letter-spacing:0.755px;">+ NEW TASK</div>
<div class="t" style="left:53.60px;top:990.00px;font-size:17.30px;line-height:17.30px;color:#25282e;letter-spacing:1.435px;">4/29/19</div>
<svg class="a" style="left:135.60px;top:991.30px;" width="7" height="15" viewBox="0 0 7 15" fill="none"><path d="M1 0.8L5.4 7.5L1 14.2" stroke="#c4c4c4" stroke-width="1.2"/></svg>
<div class="t" style="left:150.81px;top:990.00px;font-size:17.30px;line-height:17.30px;color:#f01818;letter-spacing:1.505px;">5/3/19</div>
<div class="a" style="left:78.00px;top:1089.60px;width:1810.00px;height:176.85px;background:#fff;box-shadow:-6px 0 8px -2px rgba(0,0,0,0.035);"></div>
<div class="a" style="left:78.00px;top:1053.20px;width:114.00px;height:36.80px;background:#4ddbb9;border-radius:5px 5px 0 0;"></div>
<div class="t" style="left:91.34px;top:1064.00px;font-size:16.28px;line-height:16.28px;color:#fff;letter-spacing:1.728px;-webkit-text-stroke:0.35px #fff;">PLANNED</div>
<svg class="a" style="left:46.30px;top:1055.30px;" width="26" height="26" viewBox="0 0 26 26" fill="none"><circle cx="13" cy="13" r="11.6" stroke="#4ddbb9" stroke-width="1.4"/><path d="M8.7 11L13 15.2L17.3 11" stroke="#4ddbb9" stroke-width="1.4"/></svg>
<div class="t" style="left:216.22px;top:1066.00px;font-size:14.68px;line-height:14.68px;color:#919191;letter-spacing:1.018px;-webkit-text-stroke:0.55px #919191;">3 TASKS</div>
<div class="t" style="left:657.15px;top:1065.00px;font-size:15.12px;line-height:15.12px;color:#8c8c8c;letter-spacing:0.492px;-webkit-text-stroke:0.35px #8c8c8c;">ASSIGNEE</div>
<div class="t" style="left:809.63px;top:1065.00px;font-size:15.12px;line-height:15.12px;color:#8c8c8c;letter-spacing:1.001px;-webkit-text-stroke:0.35px #8c8c8c;">DUE DATE</div>
<div class="t" style="left:967.33px;top:1065.00px;font-size:15.12px;line-height:15.12px;color:#8c8c8c;letter-spacing:0.705px;-webkit-text-stroke:0.35px #8c8c8c;">PRIORITY</div>
<div class="t" style="left:1098.64px;top:1065.00px;font-size:15.12px;line-height:15.12px;color:#8c8c8c;letter-spacing:0.662px;-webkit-text-stroke:0.35px #8c8c8c;">TIME ESTIMATE</div>
<div class="t" style="left:1292.44px;top:1065.00px;font-size:15.12px;line-height:15.12px;color:#8c8c8c;letter-spacing:1.213px;-webkit-text-stroke:0.35px #8c8c8c;">TEAM</div>
<div class="t" style="left:1424.93px;top:1065.00px;font-size:15.12px;line-height:15.12px;color:#8c8c8c;letter-spacing:0.344px;-webkit-text-stroke:0.35px #8c8c8c;">PROGRESS</div>
<div class="t" style="left:1603.14px;top:1065.00px;font-size:15.12px;line-height:15.12px;color:#8c8c8c;letter-spacing:0.753px;-webkit-text-stroke:0.35px #8c8c8c;">TYPE</div>
<div class="t" style="left:1748.89px;top:1065.00px;font-size:15.12px;line-height:15.12px;color:#8c8c8c;letter-spacing:0.530px;-webkit-text-stroke:0.35px #8c8c8c;">SPRINT</div>
<div class="a" style="left:1237.50px;top:1090.40px;width:151.60px;height:58.85px;background:#800000;"></div>
<div class="a" style="left:1546.90px;top:1090.40px;width:150.80px;height:58.85px;background:#1bbc9c;"></div>
<div class="a" style="left:1237.50px;top:1148.95px;width:151.60px;height:58.85px;background:#0fa8f5;"></div>
<div class="a" style="left:1546.90px;top:1148.95px;width:150.80px;height:58.85px;background:#1bbc9c;"></div>
<div class="a" style="left:1237.50px;top:1207.50px;width:151.60px;height:58.55px;background:#fbd900;"></div>
<div class="a" style="left:1546.90px;top:1207.50px;width:150.80px;height:58.55px;background:#f900ea;"></div>
<div class="a" style="left:109.00px;top:1113.60px;width:12.00px;height:12.00px;background:#4ddbb9;border-radius:3px;"></div>
<div class="t" style="left:143.00px;top:1110.00px;font-size:20.78px;line-height:20.78px;color:#25282e;letter-spacing:1.284px;">Overhauled API</div>
<svg class="a" style="left:675.00px;top:1096.90px;" width="42" height="42" viewBox="0 0 42 42" fill="none"><circle cx="20.8" cy="21" r="19.6" stroke="#c2c2c2" stroke-width="1.1" stroke-dasharray="3.4 3"/><circle cx="20.8" cy="15.5" r="5" stroke="#bdbdbd" stroke-width="1.2"/><path d="M11.6 30.5C11.6 25.2 15.4 21.6 20.8 21.6C23.8 21.6 26 22.6 27.8 24.4" stroke="#bdbdbd" stroke-width="1.2"/><circle cx="31.4" cy="31.5" r="8.6" fill="#bbbbbb"/><path d="M31.4 27.3V35.7M27.2 31.5H35.6" stroke="#fff" stroke-width="1.9"/></svg>
<div class="t" style="left:830.62px;top:1110.00px;font-size:17.44px;line-height:17.44px;color:#25282e;letter-spacing:2.267px;">Mon</div>
<svg class="a" style="left:996.00px;top:1107.10px;" width="21" height="25" viewBox="0 0 21 25" fill="none"><path d="M2.35 0.5V23.4" stroke="#ffcc00" stroke-width="1.3"/><path d="M2.3 2.5H19L14.4 7.7L19 12.9H2.3Z" fill="#ffcc00"/></svg>
<svg class="a" style="left:1138.30px;top:1108.70px;" width="13.5" height="19" viewBox="0 0 13.5 19" fill="none"><g stroke="#d0d0d0" stroke-width="1.05" fill="none"><rect x="0.5" y="0.5" width="12.50" height="2.07" rx="1.03"/><rect x="0.5" y="16.43" width="12.50" height="2.07" rx="1.03"/><path d="M1.69 2.57C1.69 7.03 4.59 9.40 6.75 9.40C8.91 9.40 11.81 7.03 11.81 2.57"/><path d="M1.69 16.43C1.69 11.97 4.59 9.40 6.75 9.40C8.91 9.40 11.81 11.97 11.81 16.43"/></g></svg>
<div class="t" style="left:1164.35px;top:1112.00px;font-size:17.01px;line-height:17.01px;color:#505050;letter-spacing:1.389px;">32h</div>
<div class="t" style="left:1269.22px;top:1110.00px;font-size:20.49px;line-height:20.49px;color:#fff;letter-spacing:1.374px;">Backend</div>
<div class="a" style="left:1403px;top:1111.80px;width:84.9px;height:15.3px;box-sizing:border-box;border:1.4px solid #48c427;border-radius:8px;background:#fff"></div>
<div class="t" style="left:1496.78px;top:1111.00px;font-size:15.84px;line-height:15.84px;color:#40c020;letter-spacing:1.085px;">0%</div>
<div class="t" style="left:1556.61px;top:1110.00px;font-size:20.49px;line-height:20.49px;color:#fff;letter-spacing:1.053px;">Improveme...</div>
<div class="a" style="left:1730.20px;top:1104.30px;width:92.60px;height:30.10px;background:#2ecd6f;border-radius:4px;"></div>
<div class="t" style="left:1737.17px;top:1110.00px;font-size:20.49px;line-height:20.49px;color:#fff;letter-spacing:1.157px;-webkit-text-stroke:0.40px #fff;">Sprint 3</div>
<div class="a" style="left:109.00px;top:1172.15px;width:12.00px;height:12.00px;background:#4ddbb9;border-radius:3px;"></div>
<div class="t" style="left:143.00px;top:1169.00px;font-size:20.78px;line-height:20.78px;color:#25282e;letter-spacing:1.231px;">Translation and Localization</div>
<svg class="a" style="left:675.00px;top:1155.45px;" width="42" height="42" viewBox="0 0 42 42" fill="none"><circle cx="20.8" cy="21" r="19.6" stroke="#c2c2c2" stroke-width="1.1" stroke-dasharray="3.4 3"/><circle cx="20.8" cy="15.5" r="5" stroke="#bdbdbd" stroke-width="1.2"/><path d="M11.6 30.5C11.6 25.2 15.4 21.6 20.8 21.6C23.8 21.6 26 22.6 27.8 24.4" stroke="#bdbdbd" stroke-width="1.2"/><circle cx="31.4" cy="31.5" r="8.6" fill="#bbbbbb"/><path d="M31.4 27.3V35.7M27.2 31.5H35.6" stroke="#fff" stroke-width="1.9"/></svg>
<div class="t" style="left:822.31px;top:1168.00px;font-size:17.44px;line-height:17.44px;color:#f01818;letter-spacing:1.365px;">7/3/19</div>
<svg class="a" style="left:996.00px;top:1165.65px;" width="21" height="25" viewBox="0 0 21 25" fill="none"><path d="M2.35 0.5V23.4" stroke="#6fddff" stroke-width="1.3"/><path d="M2.3 2.5H19L14.4 7.7L19 12.9H2.3Z" fill="#6fddff"/></svg>
<svg class="a" style="left:1136.40px;top:1167.25px;" width="13.5" height="19" viewBox="0 0 13.5 19" fill="none"><g stroke="#d0d0d0" stroke-width="1.05" fill="none"><rect x="0.5" y="0.5" width="12.50" height="2.07" rx="1.03"/><rect x="0.5" y="16.43" width="12.50" height="2.07" rx="1.03"/><path d="M1.69 2.57C1.69 7.03 4.59 9.40 6.75 9.40C8.91 9.40 11.81 7.03 11.81 2.57"/><path d="M1.69 16.43C1.69 11.97 4.59 9.40 6.75 9.40C8.91 9.40 11.81 11.97 11.81 16.43"/></g></svg>
<div class="t" style="left:1162.51px;top:1170.00px;font-size:17.01px;line-height:17.01px;color:#505050;letter-spacing:3.311px;">40h</div>
<div class="t" style="left:1290.56px;top:1169.00px;font-size:20.49px;line-height:20.49px;color:#fff;letter-spacing:2.156px;">Web</div>
<div class="a" style="left:1403px;top:1170.35px;width:84.9px;height:15.3px;box-sizing:border-box;border:1.4px solid #48c427;border-radius:8px;background:#fff"></div>
<div class="t" style="left:1496.78px;top:1170.00px;font-size:15.84px;line-height:15.84px;color:#40c020;letter-spacing:1.085px;">0%</div>
<div class="t" style="left:1556.61px;top:1169.00px;font-size:20.49px;line-height:20.49px;color:#fff;letter-spacing:1.053px;">Improveme...</div>
<div class="a" style="left:1730.20px;top:1162.85px;width:92.60px;height:30.10px;background:#2ecd6f;border-radius:4px;"></div>
<div class="t" style="left:1737.17px;top:1169.00px;font-size:20.49px;line-height:20.49px;color:#fff;letter-spacing:1.157px;-webkit-text-stroke:0.40px #fff;">Sprint 3</div>
<div class="a" style="left:109.00px;top:1230.70px;width:12.00px;height:12.00px;background:#4ddbb9;border-radius:3px;"></div>
<div class="t" style="left:143.00px;top:1227.00px;font-size:20.78px;line-height:20.78px;color:#25282e;letter-spacing:1.289px;">Mobile Inbox</div>
<svg class="a" style="left:675.00px;top:1214.00px;" width="42" height="42" viewBox="0 0 42 42" fill="none"><circle cx="20.8" cy="21" r="19.6" stroke="#c2c2c2" stroke-width="1.1" stroke-dasharray="3.4 3"/><circle cx="20.8" cy="15.5" r="5" stroke="#bdbdbd" stroke-width="1.2"/><path d="M11.6 30.5C11.6 25.2 15.4 21.6 20.8 21.6C23.8 21.6 26 22.6 27.8 24.4" stroke="#bdbdbd" stroke-width="1.2"/><circle cx="31.4" cy="31.5" r="8.6" fill="#bbbbbb"/><path d="M31.4 27.3V35.7M27.2 31.5H35.6" stroke="#fff" stroke-width="1.9"/></svg>
<div class="t" style="left:830.13px;top:1227.00px;font-size:17.44px;line-height:17.44px;color:#f01818;letter-spacing:0.841px;">Jul 5</div>
<svg class="a" style="left:996.00px;top:1224.20px;" width="21" height="25" viewBox="0 0 21 25" fill="none"><path d="M2.35 0.5V23.4" stroke="#ffcc00" stroke-width="1.3"/><path d="M2.3 2.5H19L14.4 7.7L19 12.9H2.3Z" fill="#ffcc00"/></svg>
<svg class="a" style="left:1138.30px;top:1225.80px;" width="13.5" height="19" viewBox="0 0 13.5 19" fill="none"><g stroke="#d0d0d0" stroke-width="1.05" fill="none"><rect x="0.5" y="0.5" width="12.50" height="2.07" rx="1.03"/><rect x="0.5" y="16.43" width="12.50" height="2.07" rx="1.03"/><path d="M1.69 2.57C1.69 7.03 4.59 9.40 6.75 9.40C8.91 9.40 11.81 7.03 11.81 2.57"/><path d="M1.69 16.43C1.69 11.97 4.59 9.40 6.75 9.40C8.91 9.40 11.81 11.97 11.81 16.43"/></g></svg>
<div class="t" style="left:1164.35px;top:1229.00px;font-size:17.01px;line-height:17.01px;color:#505050;letter-spacing:1.389px;">32h</div>
<div class="t" style="left:1279.52px;top:1227.00px;font-size:20.49px;line-height:20.49px;color:#25282e;letter-spacing:1.324px;">Mobile</div>
<div class="a" style="left:1403px;top:1228.90px;width:84.9px;height:15.3px;box-sizing:border-box;border:1.4px solid #48c427;border-radius:8px;background:#fff"></div>
<div class="t" style="left:1496.78px;top:1228.00px;font-size:15.84px;line-height:15.84px;color:#40c020;letter-spacing:1.085px;">0%</div>
<div class="t" style="left:1582.52px;top:1227.00px;font-size:20.49px;line-height:20.49px;color:#fff;letter-spacing:1.327px;">Feature</div>
<div class="a" style="left:1730.20px;top:1221.40px;width:92.60px;height:30.10px;background:#2ecd6f;border-radius:4px;"></div>
<div class="t" style="left:1737.17px;top:1227.00px;font-size:20.49px;line-height:20.49px;color:#fff;letter-spacing:1.157px;-webkit-text-stroke:0.40px #fff;">Sprint 3</div>
<div class="a" style="left:1642.80px;top:1186.30px;width:48.80px;height:48.40px;background:#7b68ee;border-radius:15px;box-shadow:0 3px 10px rgba(123,104,238,0.35);"></div>
<svg class="a" style="left:1657.00px;top:1199.50px;" width="23" height="24" viewBox="0 0 23 24" fill="none"><g stroke="#fff" stroke-width="1.8" stroke-linejoin="round" stroke-linecap="round"><path d="M17.6 13V19.2C17.6 20.4 16.6 21.4 15.4 21.4H4C2.8 21.4 1.8 20.4 1.8 19.2V5.6C1.8 4.4 2.8 3.4 4 3.4H13"/><path d="M5 1V4.6M8.6 1V4.6M12.2 1V4.6"/><path d="M8 17.4L8.6 13.8L17.6 4.8C18.4 4 19.7 4 20.5 4.8C21.3 5.6 21.3 6.9 20.5 7.7L11.5 16.7Z"/></g></svg>
<div class="a" style="left:1704.00px;top:1186.30px;width:95.00px;height:48.40px;background:#7b68ee;border-radius:15px;box-shadow:0 3px 10px rgba(123,104,238,0.35);"></div>
<svg class="a" style="left:1716.40px;top:1203.00px;" width="15.4" height="15.4" viewBox="0 0 15.4 15.4" fill="none"><path d="M7.7 0.6V14.8M0.6 7.7H14.8" stroke="#fff" stroke-width="2.3" stroke-linecap="round"/></svg>
<div class="t" style="left:1745.00px;top:1202.00px;font-size:18.02px;line-height:18.02px;color:#fff;letter-spacing:0.301px;font-weight:bold;">Task</div>
<div class="a" style="left:1813.30px;top:1187.00px;width:46.70px;height:46.70px;background:#fff;border-radius:13px;box-shadow:0 2px 10px rgba(0,0,0,0.13);"></div>
<svg class="a" style="left:1826.30px;top:1200.40px;" width="10" height="10" viewBox="0 0 10 10" fill="none"><rect x="1.9" y="1.9" width="6.2" height="6.2" rx="1.8" stroke="#fd71af" stroke-width="1.6"/></svg>
<svg class="a" style="left:1837.20px;top:1200.40px;" width="10" height="10" viewBox="0 0 10 10" fill="none"><rect x="1.9" y="1.9" width="6.2" height="6.2" rx="1.8" stroke="#e6b400" stroke-width="1.6"/></svg>
<svg class="a" style="left:1826.30px;top:1211.40px;" width="10" height="10" viewBox="0 0 10 10" fill="none"><rect x="1.9" y="1.9" width="6.2" height="6.2" rx="1.8" stroke="#1db88a" stroke-width="1.6"/></svg>
<svg class="a" style="left:1837.20px;top:1211.40px;" width="10" height="10" viewBox="0 0 10 10" fill="none"><rect x="1.9" y="1.9" width="6.2" height="6.2" rx="1.8" stroke="#4f9cf5" stroke-width="1.6"/></svg>
</div></body></html>
